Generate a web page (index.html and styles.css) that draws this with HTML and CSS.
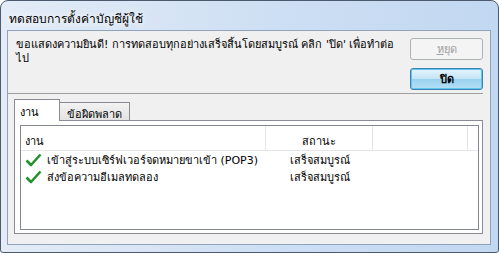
FILE: index.html
```html
<!DOCTYPE html>
<html lang="th">

<head>
    <meta charset="utf-8">
    <title>ทดสอบการตั้งค่าบัญชีผู้ใช้</title>
    <link rel="stylesheet" href="styles.css">
</head>

<body>

    <div class="window">
        <div class="titlebar">
            <span class="title">ทดสอบการตั้งค่าบัญชีผู้ใช้</span>
        </div>

        <div class="client">
            <div class="top">
                <p class="message">ขอแสดงความยินดี! การทดสอบทุกอย่างเสร็จสิ้นโดยสมบูรณ์ คลิก 'ปิด' เพื่อทำต่อ<br>ไป</p>
                <div class="buttons">
                    <button class="btn" disabled><u>ห</u>ยุด</button>
                    <button class="btn default">ปิด</button>
                </div>
            </div>

            <div class="sep"></div>

            <div class="tabs">
                <div class="tab active">งาน</div>
                <div class="tab">ข้อผิดพลาด</div>
            </div>

            <div class="panel">
                <div class="list">
                    <div class="head">
                        <div class="col name">งาน</div>
                        <div class="col status">สถานะ</div>
                        <div class="col rest"></div>
                    </div>

                    <div class="row">
                        <div class="col name">
                            <svg class="check" width="17" height="14" viewBox="0 0 17 14">
                                <path d="M1.5 7.5 L6 12 L15.5 1.5" fill="none" stroke="#22922a" stroke-width="2.6" stroke-linejoin="round" />
                            </svg>
                            เข้าสู่ระบบเซิร์ฟเวอร์จดหมายขาเข้า (POP3)
                        </div>
                        <div class="col status">เสร็จสมบูรณ์</div>
                    </div>

                    <div class="row">
                        <div class="col name">
                            <svg class="check" width="17" height="14" viewBox="0 0 17 14">
                                <path d="M1.5 7.5 L6 12 L15.5 1.5" fill="none" stroke="#22922a" stroke-width="2.6" stroke-linejoin="round" />
                            </svg>
                            ส่งข้อความอีเมลทดลอง
                        </div>
                        <div class="col status">เสร็จสมบูรณ์</div>
                    </div>
                </div>
            </div>
        </div>
    </div>

</body>

</html>
```

FILE: styles.css
```css
* {
    box-sizing: border-box;
}

body {
    margin: 0;
    background: #ffffff;
    font-family: Tahoma, "DejaVu Sans", "Liberation Sans", sans-serif;
    font-size: 11px;
    color: #000000;
}

.window {
    width: 499px;
    height: 253px;
    display: flex;
    flex-direction: column;
    border: 1px solid #4b5a6c;
    border-radius: 8px 8px 3px 3px;
    background: linear-gradient(to right, #e3ecf7, #cddff3 55%, #c2d7f1);
    overflow: hidden;
}

.titlebar {
    height: 29px;
    padding: 8px 0 0 8px;
}

.title {
    font-size: 12px;
    text-shadow: 0 0 6px #ffffff, 0 0 10px #ffffff;
}

.client {
    flex: 1;
    margin: 0 7px 7px 6px;
    border: 1px solid #8fa3bd;
    background: #f0f0f0;
    display: flex;
    flex-direction: column;
    padding: 0 7px 10px 5px;
}

.top {
    display: flex;
    justify-content: space-between;
    height: 62px;
}

.message {
    margin: 0;
    padding: 7px 0 0 3px;
    line-height: 14px;
}

.buttons {
    display: flex;
    flex-direction: column;
    gap: 8px;
    padding-top: 7px;
}

.btn {
    width: 73px;
    height: 22px;
    font-family: inherit;
    font-size: 11px;
    border-radius: 3px;
    padding: 0;
}

.btn:disabled {
    color: #a0a0a0;
    background: #f4f4f4;
    border: 1px solid #adb2b5;
}

.btn.default {
    color: #000000;
    background: linear-gradient(#e5f4fc, #c4e5f6 50%, #98d1ef 51%, #b6e0f5);
    border: 1px solid #3c7fb1;
    box-shadow: inset 0 0 0 1px #5fc8f0;
    font-weight: bold;
}

.sep {
    height: 1px;
    background: #a0a0a0;
    margin-left: -6px;
    margin-right: 0;
}

.tabs {
    display: flex;
    align-items: flex-end;
    margin-top: 4px;
    padding-left: 1px;
    height: 22px;
}

.tab {
    height: 18px;
    padding: 2px 7px 0 7px;
    border: 1px solid #898c95;
    border-bottom: none;
    background: linear-gradient(#f2f2f2, #e3e3e3);
}

.tab.active {
    height: 22px;
    width: 46px;
    padding: 3px 0 0 5px;
    background: #ffffff;
    position: relative;
    top: 1px;
    z-index: 1;
}

.tab.active + .tab {
    border-left: none;
}

.panel {
    flex: 1;
    margin-left: 1px;
    border: 1px solid #898c95;
    background: #ffffff;
    padding: 4px 3px 3px 5px;
    display: flex;
}

.list {
    flex: 1;
    border: 1px solid #828790;
}

.head {
    display: flex;
    height: 25px;
    padding-top: 6px;
    border-bottom: 1px solid #e5e5e5;
}

.head .col {
    border-right: 1px solid #e5e5e5;
    margin-top: -6px;
    padding-top: 6px;
}

.row {
    display: flex;
    height: 17px;
    align-items: center;
}

.row:first-of-type {
    margin-top: 1px;
}

.col.name {
    width: 245px;
    padding-left: 4px;
    display: flex;
    align-items: center;
    white-space: nowrap;
}

.col.status {
    width: 107px;
    text-align: center;
}

.col.rest {
    width: 95px;
}

.check {
    margin-right: 5px;
    flex-shrink: 0;
}
```
